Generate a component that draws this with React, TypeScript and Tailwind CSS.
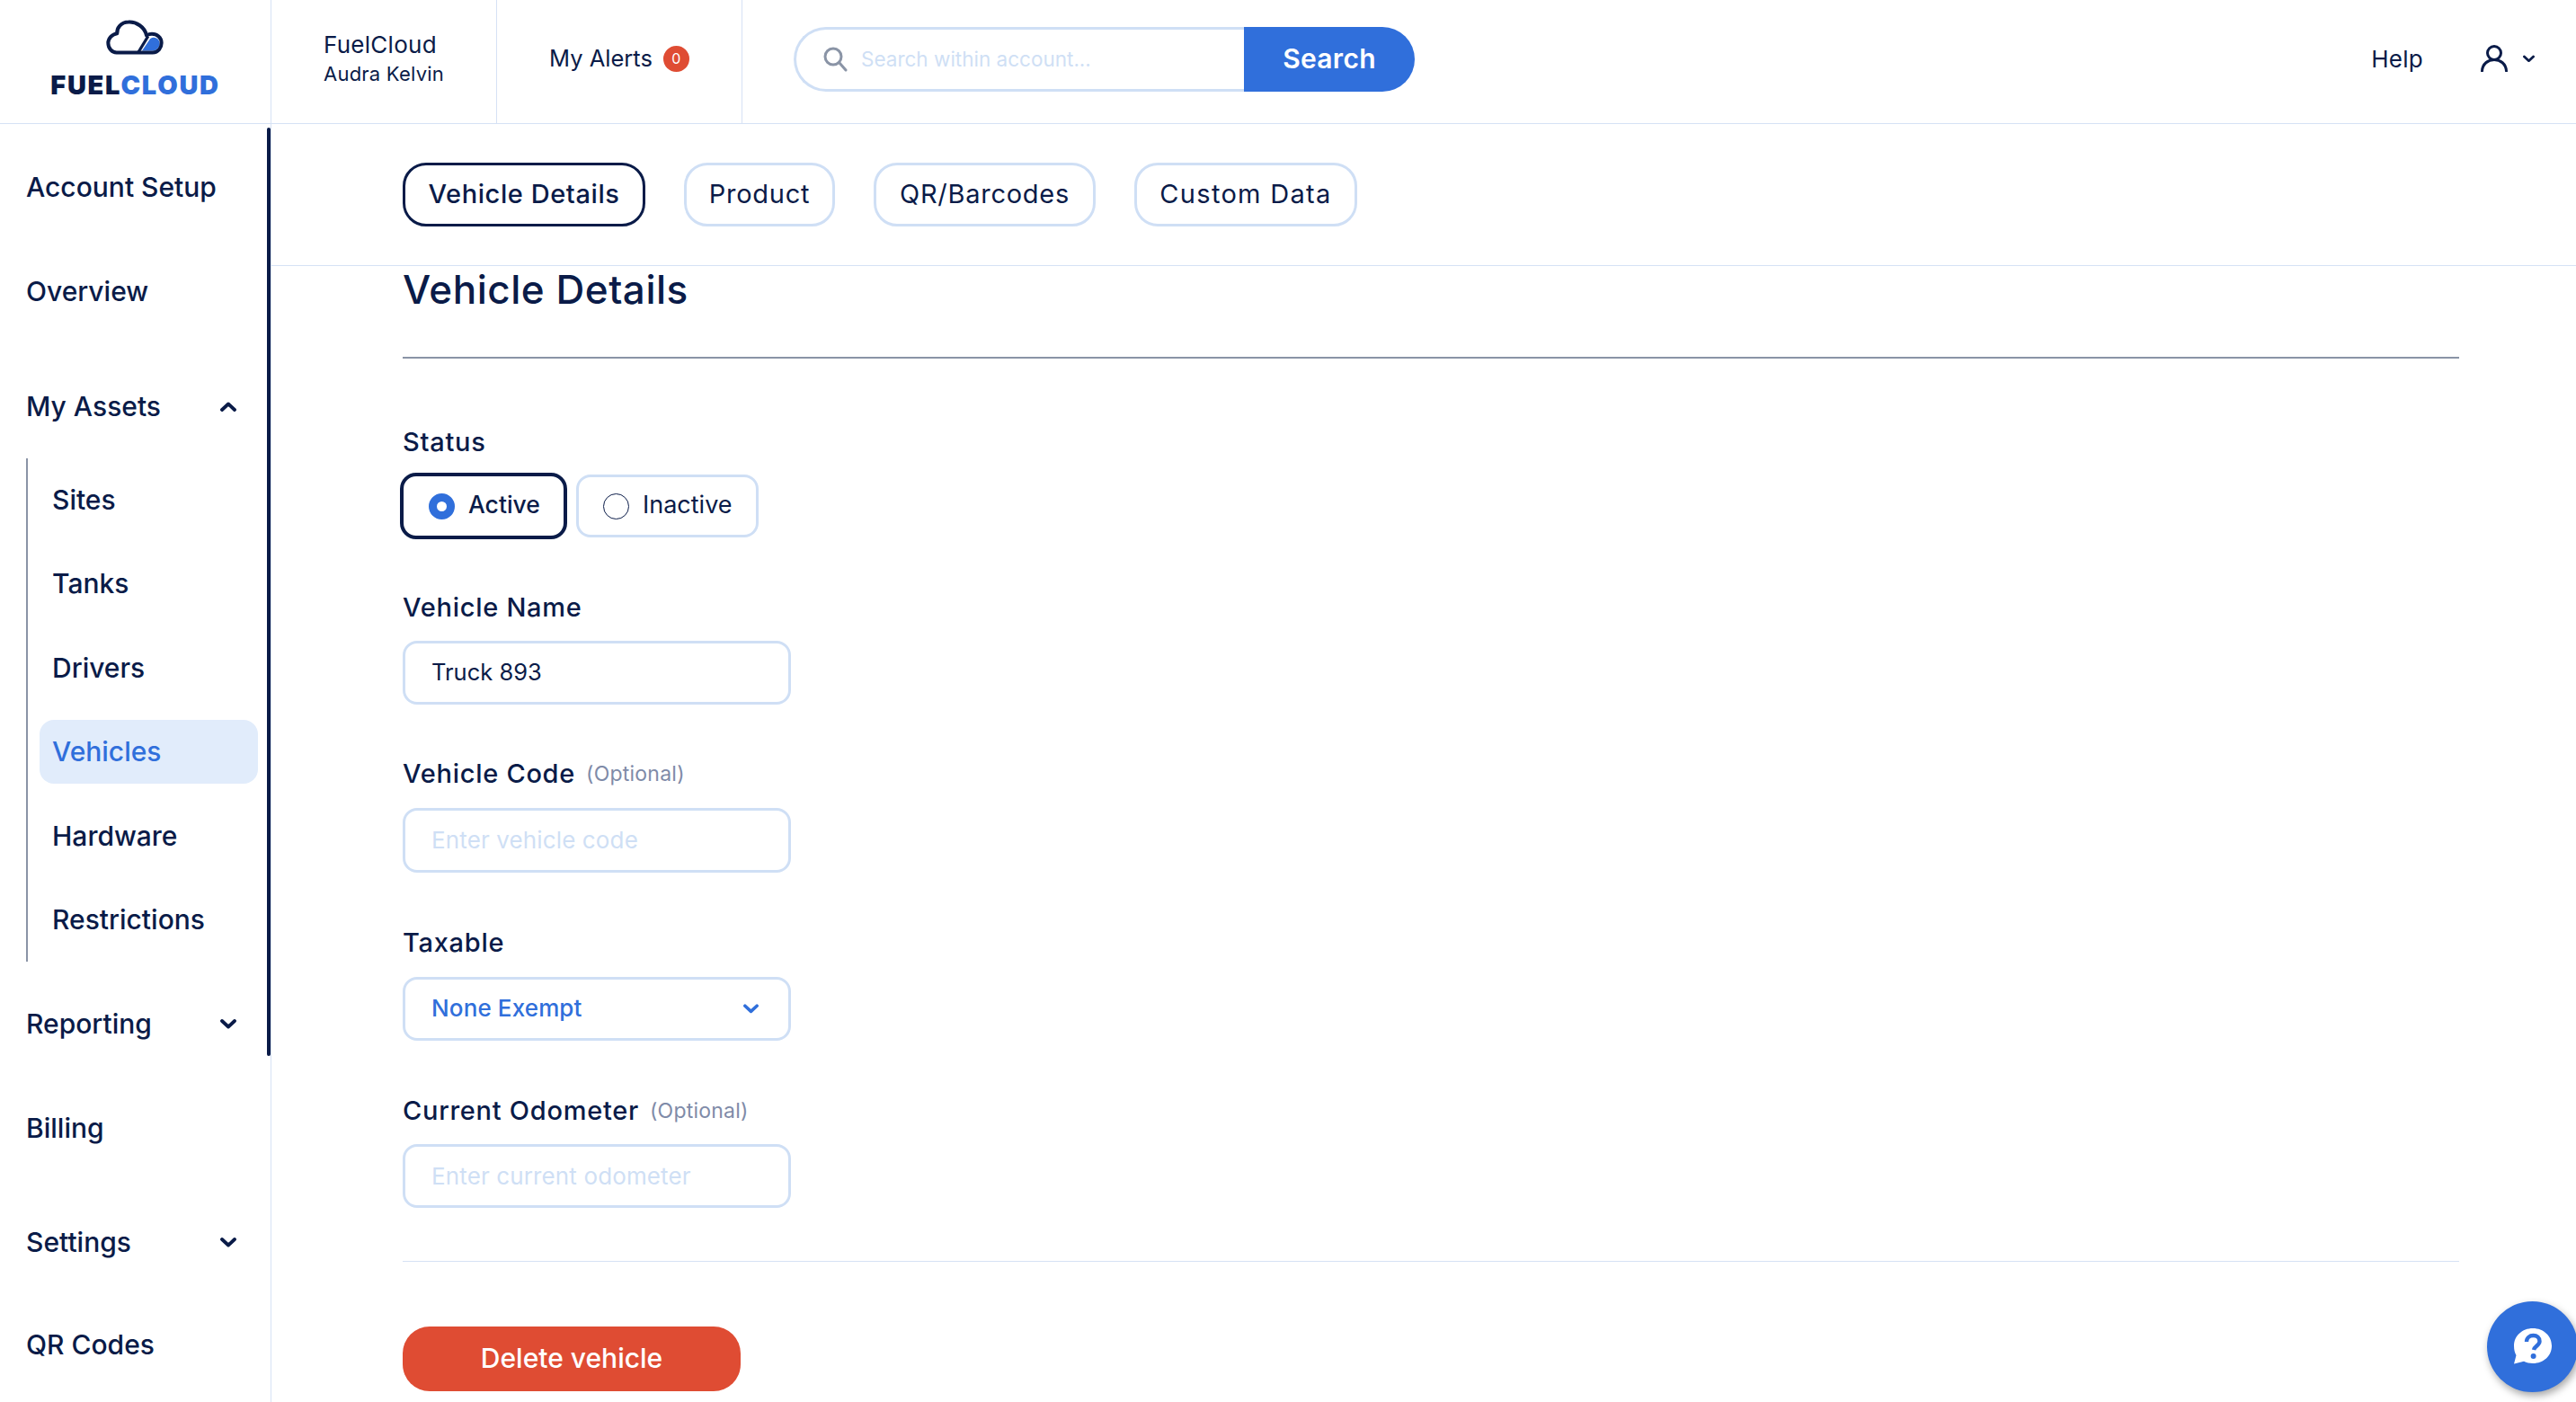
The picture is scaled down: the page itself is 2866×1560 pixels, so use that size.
import React from "react";

const Chevron = ({ up = false, className = "" }: { up?: boolean; className?: string }) => (
  <svg viewBox="0 0 18 11" className={className} fill="none" stroke="currentColor" strokeWidth="3.8" strokeLinecap="round" strokeLinejoin="round">
    <path d={up ? "M2 9 L9 2.5 L16 9" : "M2 2 L9 8.5 L16 2"} />
  </svg>
);

const Logo = () => (
  <div className="flex flex-col items-center">
    <svg viewBox="265 30 195 125" className="w-[65px] h-[42px]" fill="none">
      <path d="M385 136 L412 96 C430 84 445 100 444 112 C443 126 432 136 420 136 Z" fill="#306fdb" />
      <path d="M300 142 H420 C440 142 450 125 450 110 C450 92 435 80 418 80 C410 80 405 82 400 85 C395 57 365 38 340 40 C315 40 300 60 302 78 C285 80 272 95 272 110 C272 128 285 142 300 142 Z" stroke="#0a1b48" strokeWidth="12" strokeLinejoin="round" />
      <path d="M372 142 L405 88" stroke="#0a1b48" strokeWidth="10" />
    </svg>
    <div className="mt-[17px] h-[30px] leading-[30px] text-[29px] font-black tracking-[0.06em] whitespace-nowrap">
      <span className="text-[#0a1b48]">FUEL</span>
      <span className="text-[#306fdb]">CLOUD</span>
    </div>
  </div>
);

const NavItem = ({ label, mt, chevron }: { label: string; mt: string; chevron?: "up" | "down" }) => (
  <div className={`${mt} h-[70px] flex items-center justify-between pl-[29px] pr-[38px] text-[30px] font-[545]`}>
    <span>{label}</span>
    {chevron && <Chevron up={chevron === "up"} className="w-[18px] h-[11px]" />}
  </div>
);

const SubItem = ({ label, active }: { label: string; active?: boolean }) => (
  <div className={`h-[71px] w-[243px] flex items-center pl-[14px] rounded-[16px] text-[30px] font-[545] ${active ? "bg-[#e1ecfb] text-[#306fdb]" : ""}`}>
    {label}
  </div>
);

const Sidebar = () => (
  <aside className="relative w-[302px] shrink-0 border-r border-[#d6e2f5] pt-[35px] text-[#0a1b48] h-[1422px]">
    <div className="absolute right-0 top-[4px] w-[4px] h-[1033px] bg-[#0a1b48] rounded-full" />
    <NavItem label="Account Setup" mt="" />
    <NavItem label="Overview" mt="mt-[46px]" />
    <NavItem label="My Assets" mt="mt-[58px]" chevron="up" />
    <div className="mt-[23px] ml-[29px] border-l-2 border-[#8a94a6] pl-[13px] pt-[11px] pb-[11px] flex flex-col gap-[22.4px]">
      <SubItem label="Sites" />
      <SubItem label="Tanks" />
      <SubItem label="Drivers" />
      <SubItem label="Vehicles" active />
      <SubItem label="Hardware" />
      <SubItem label="Restrictions" />
    </div>
    <NavItem label="Reporting" mt="mt-[35px]" chevron="down" />
    <NavItem label="Billing" mt="mt-[46px]" />
    <NavItem label="Settings" mt="mt-[57px]" chevron="down" />
    <NavItem label="QR Codes" mt="mt-[44px]" />
  </aside>
);

const Header = () => (
  <header className="h-[138px] border-b border-[#d6e2f5] flex items-stretch text-[#0a1b48]">
    <div className="w-[302px] shrink-0 border-r border-[#d6e2f5] flex justify-center pt-[21px]">
      <Logo />
    </div>
    <div className="w-[251px] shrink-0 border-r border-[#d6e2f5] pl-[58px] pt-[33px]">
      <div className="text-[26px] leading-[34px] tracking-[0.01em]">FuelCloud</div>
      <div className="text-[22px] leading-[30px] tracking-[0.01em]">Audra Kelvin</div>
    </div>
    <div className="w-[273px] shrink-0 border-r border-[#d6e2f5] pl-[58px] pb-[7px] flex items-center gap-[12px]">
      <span className="text-[25.5px]">My Alerts</span>
      <span className="w-[29px] h-[29px] rounded-full bg-[#df4c33] text-white text-[16px] flex items-center justify-center">0</span>
    </div>
    <div className="ml-[57px] mt-[30px] w-[691px] h-[72px] flex">
      <div className="flex-1 border-[3px] border-r-0 border-[#cfdff5] rounded-l-[36px] flex items-center pl-[30px] gap-[15px]">
        <svg viewBox="0 0 27 28" className="w-[27px] h-[28px]" fill="none" stroke="#8a94a6" strokeWidth="3" strokeLinecap="round">
          <circle cx="11" cy="11" r="9" />
          <path d="M18 18 L25 26" />
        </svg>
        <span className="text-[22.5px] text-[#cfdff5]">Search within account...</span>
      </div>
      <div className="w-[190px] bg-[#306fdb] rounded-r-[36px] text-white text-[30px] font-semibold tracking-[0.01em] flex items-center justify-center pb-[2px]">
        Search
      </div>
    </div>
    <div className="ml-auto flex items-center pr-[46px] pb-[7px]">
      <span className="text-[26px] tracking-[0.01em]">Help</span>
      <svg viewBox="0 0 30 30" className="ml-[64px] w-[30px] h-[30px]" fill="none" stroke="#0a1b48" strokeWidth="3" strokeLinecap="round">
        <circle cx="15" cy="9" r="7.5" />
        <path d="M1.5 29 C2 21 8 16.5 15 16.5 C22 16.5 28 21 28.5 29" />
      </svg>
      <Chevron className="ml-[17px] w-[13px] h-[9px]" />
    </div>
  </header>
);

const Tab = ({ label, width, active, spacing }: { label: string; width: string; active?: boolean; spacing: string }) => (
  <div className={`${width} ${spacing} h-[71px] pb-[1px] rounded-[26px] border-[3px] flex items-center justify-center text-[29px] ${active ? "border-[#0a1b48] font-[545]" : "border-[#cfdff5]"}`}>
    {label}
  </div>
);

const Label = ({ label, optional, mt }: { label: string; optional?: boolean; mt: string }) => (
  <div className={`${mt} h-[36px] flex items-center gap-[12px]`}>
    <span className="text-[29px] font-[545] tracking-[0.025em]">{label}</span>
    {optional && <span className="text-[23px] text-[#7f8ba8] tracking-[0.01em]">(Optional)</span>}
  </div>
);

const Box = ({ mt, h = "h-[71px]", children }: { mt: string; h?: string; children: React.ReactNode }) => (
  <div className={`${mt} ${h} w-[432px] rounded-[16px] border-[3px] border-[#cfdff5] flex items-center pl-[29px] pr-[33px] pb-[1px] text-[26px]`}>
    {children}
  </div>
);

const Main = () => (
  <main className="flex-1 min-w-0 text-[#0a1b48]">
    <div className="h-[158px] border-b border-[#d6e2f5] pl-[146px] pt-[43px] flex gap-[43px]">
      <Tab label="Vehicle Details" width="w-[270px]" spacing="tracking-[0.02em]" active />
      <Tab label="Product" width="w-[168px]" spacing="tracking-[0.025em]" />
      <Tab label="QR/Barcodes" width="w-[247px]" spacing="tracking-[0.025em]" />
      <Tab label="Custom Data" width="w-[248px]" spacing="tracking-[0.045em]" />
    </div>
    <div className="pl-[146px] pr-[130px]">
      <h1 className="h-[52px] flex items-center text-[44px] font-[545] tracking-[0.012em] leading-none">Vehicle Details</h1>
      <div className="mt-[49px] h-[2px] bg-[#8a94a6]" />
      <Label label="Status" mt="mt-[75px]" />
      <div className="mt-[16px] -ml-[3px] flex items-center gap-[10px] text-[27px]">
        <div className="w-[186px] h-[74px] rounded-[18px] border-[4px] border-[#0a1b48] flex items-center pl-[28px] gap-[15px] font-[545]">
          <span className="w-[29px] h-[29px] rounded-full border-[9px] border-[#306fdb] bg-white" />
          <span className="pb-[2px] text-[26.5px]">Active</span>
        </div>
        <div className="w-[203px] h-[70px] rounded-[16px] border-[3px] border-[#cfdff5] flex items-center pl-[27px] gap-[15px]">
          <span className="w-[29px] h-[29px] rounded-full border border-[#0a1b48]" />
          <span className="pb-[2px]">Inactive</span>
        </div>
      </div>
      <Label label="Vehicle Name" mt="mt-[58px]" />
      <Box mt="mt-[19px]">
        <span className="text-[25.5px]">Truck 893</span>
      </Box>
      <Label label="Vehicle Code" optional mt="mt-[59px]" />
      <Box mt="mt-[20px]" h="h-[72px]">
        <span className="text-[#cfdff5] tracking-[0.005em]">Enter vehicle code</span>
      </Box>
      <Label label="Taxable" mt="mt-[60px]" />
      <Box mt="mt-[20px]" h="h-[71px]">
        <div className="w-full flex items-center justify-between text-[#306fdb] tracking-[0.005em] font-[450]">
          <span className="pb-[1px]">None Exempt</span>
          <Chevron className="w-[17px] h-[11px]" />
        </div>
      </Box>
      <Label label="Current Odometer" optional mt="mt-[60px]" />
      <Box mt="mt-[19px]" h="h-[71px]">
        <span className="text-[#cfdff5] tracking-[0.005em]">Enter current odometer</span>
      </Box>
      <div className="mt-[59px] h-[1px] bg-[#d6e2f5]" />
      <div className="mt-[72px] w-[376px] h-[72px] rounded-[30px] bg-[#df4c33] text-white text-[30px] font-[545] flex items-center justify-center pb-[1px]">
        Delete vehicle
      </div>
    </div>
  </main>
);

export default function App() {
  return (
    <div className="relative w-[2866px] h-[1560px] overflow-hidden bg-white font-['Inter','Liberation_Sans',sans-serif]">
      <Header />
      <div className="flex">
        <Sidebar />
        <Main />
      </div>
      <div className="absolute left-[2767px] top-[1448px] w-[101px] h-[101px] rounded-full bg-[#306fdb] shadow-[2px_4px_8px_rgba(0,0,0,0.35)] flex items-center justify-center">
        <svg viewBox="0 0 44 42" className="w-[44px] h-[42px]">
          <path d="M22 0 C34 0 43 8.5 43 19.5 C43 30.5 34 39 22 39 C18.5 39 15 38.2 12 36.8 L1 39.5 L3.5 30 C1.8 27 1 23.5 1 19.5 C1 8.5 10 0 22 0 Z" fill="#fff" />
          <path d="M15 15 C15 10.5 18.5 8 22.5 8 C26.5 8 29.5 10.5 29.5 14.5 C29.5 19 24 19.5 23 24" fill="none" stroke="#306fdb" strokeWidth="4.4" />
          <circle cx="22.6" cy="31" r="3" fill="#306fdb" />
        </svg>
      </div>
    </div>
  );
}
